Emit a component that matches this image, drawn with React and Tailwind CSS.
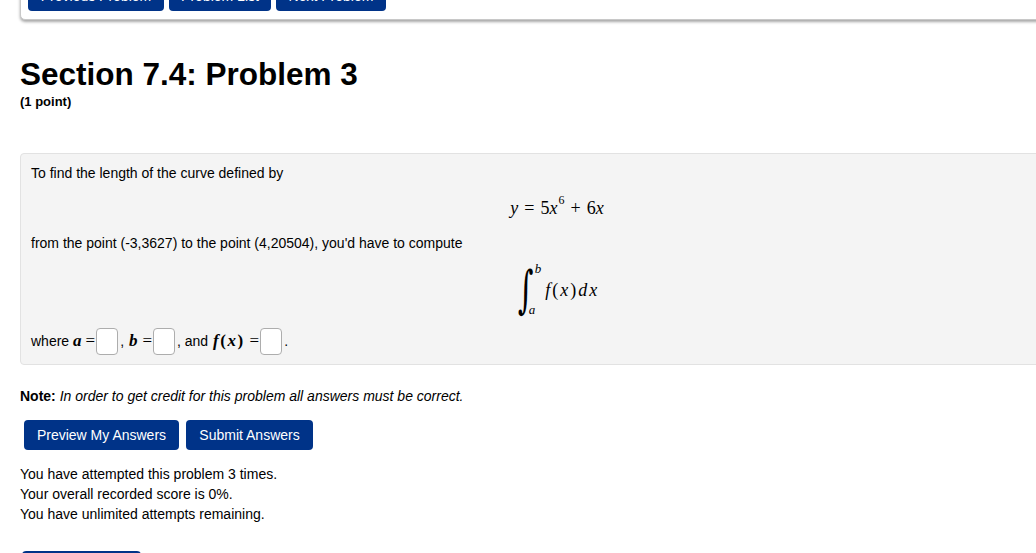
import React from 'react';

const navButtons = [
  { label: 'Previous Problem', w: 'w-[136px]' },
  { label: 'Problem List', w: 'w-[102px]' },
  { label: 'Next Problem', w: 'w-[110px]' },
];

function MathVar({ children, className = '' }) {
  return <span className={"italic font-['Liberation_Serif',serif] " + className}>{children}</span>;
}

function AnswerBox() {
  return <span className="inline-block w-[22px] h-[27px] rounded-[4px] border border-[#adadad] bg-white ml-[1px]" />;
}

export default function App() {
  return (
    <div className="w-[1036px] h-[553px] overflow-hidden bg-white text-black font-['Liberation_Sans',Arial,sans-serif]">
      {/* top nav card, page is scrolled so only the bottom is visible */}
      <div className="ml-[20px] -mt-[30px] w-[1100px] rounded-[5px] border border-[#c8c8c8] bg-white pl-[7px] pt-[10px] pb-[8px] shadow-[0_2px_3px_rgba(0,0,0,0.35)]">
        <div className="flex gap-[5px]">
          {navButtons.map((b) => (
            <button key={b.label} className={b.w + ' h-[30px] rounded-[4px] bg-[#003388] text-white text-[14px] text-center'}>
              {b.label}
            </button>
          ))}
        </div>
      </div>

      <div className="pl-[20px]">
        <h2 className="mt-[35px] text-[31.5px] font-bold leading-[38px]">Section 7.4: Problem 3</h2>
        <div className="mt-[1px] text-[13px] font-bold leading-[16px]">(1 point)</div>

        <div className="mt-[43px] w-[1074px] rounded-[4px] border border-[#e2e2e2] bg-[#f4f4f4] px-[10px] pt-[9px] pb-[9px] text-[14px] leading-[20px]">
          <p>To find the length of the curve defined by</p>
          <div className="h-[50px] flex items-center justify-center text-[18px] font-['Liberation_Serif',serif]">
            <MathVar>y</MathVar>
            <span className="mx-[6px]">=</span>
            <span>5</span>
            <MathVar>x</MathVar>
            <span className="text-[12px] relative -top-[8px] ml-[1px]">6</span>
            <span className="mx-[6px]">+</span>
            <span>6</span>
            <MathVar>x</MathVar>
          </div>
          <p>from the point (-3,3627) to the point (4,20504), you'd have to compute</p>
          <div className="h-[74px] flex items-center justify-center font-['Liberation_Serif',serif]">
            <div className="relative flex items-center h-[44px] pl-[3px]">
              <span className="inline-block text-[30px] leading-[30px] scale-y-[1.7] font-['DejaVu_Serif',serif]">∫</span>
              <span className="absolute left-[20px] top-[-6px] italic text-[13px] leading-[13px]">b</span>
              <span className="absolute left-[14px] top-[35px] italic text-[13px] leading-[13px]">a</span>
              <span className="ml-[12px] text-[18px] tracking-[2px]">
                <MathVar>f</MathVar>(<MathVar>x</MathVar>)<MathVar>dx</MathVar>
              </span>
            </div>
          </div>
          <div className="h-[28px] flex items-center">
            <span>where&nbsp;</span>
            <MathVar className="text-[17px] font-bold">a</MathVar>
            <span className="ml-[4px] text-[17px] font-['Liberation_Serif',serif]">=</span>
            <AnswerBox />
            <span className="ml-[2px]">,&nbsp;</span>
            <MathVar className="text-[17px] font-bold ml-[1px]">b</MathVar>
            <span className="ml-[5px] text-[17px] font-['Liberation_Serif',serif]">=</span>
            <AnswerBox />
            <span className="ml-[2px]">, and&nbsp;</span>
            <span className="text-[17px] font-bold font-['Liberation_Serif',serif] tracking-[1.5px] ml-[1px]">
              <MathVar>f</MathVar>(<MathVar>x</MathVar>)
            </span>
            <span className="ml-[5px] text-[17px] font-['Liberation_Serif',serif]">=</span>
            <AnswerBox />
            <span className="ml-[2px]">.</span>
          </div>
        </div>

        <p className="mt-[21px] text-[14px] leading-[20px]">
          <span className="font-bold">Note:</span> <em>In order to get credit for this problem all answers must be correct.</em>
        </p>

        <div className="mt-[14px] flex gap-[7px] pl-[4px]">
          <button className="w-[155px] h-[30px] rounded-[4px] bg-[#003388] text-white text-[14px]">Preview My Answers</button>
          <button className="w-[127px] h-[30px] rounded-[4px] bg-[#003388] text-white text-[14px]">Submit Answers</button>
        </div>

        <div className="mt-[14px] text-[14px] leading-[20px]">
          <p>You have attempted this problem 3 times.</p>
          <p>Your overall recorded score is 0%.</p>
          <p>You have unlimited attempts remaining.</p>
        </div>

        <div className="mt-[27px] ml-[2px] w-[119px] h-[30px] rounded-[4px] bg-[#003388]" />
      </div>
    </div>
  );
}
